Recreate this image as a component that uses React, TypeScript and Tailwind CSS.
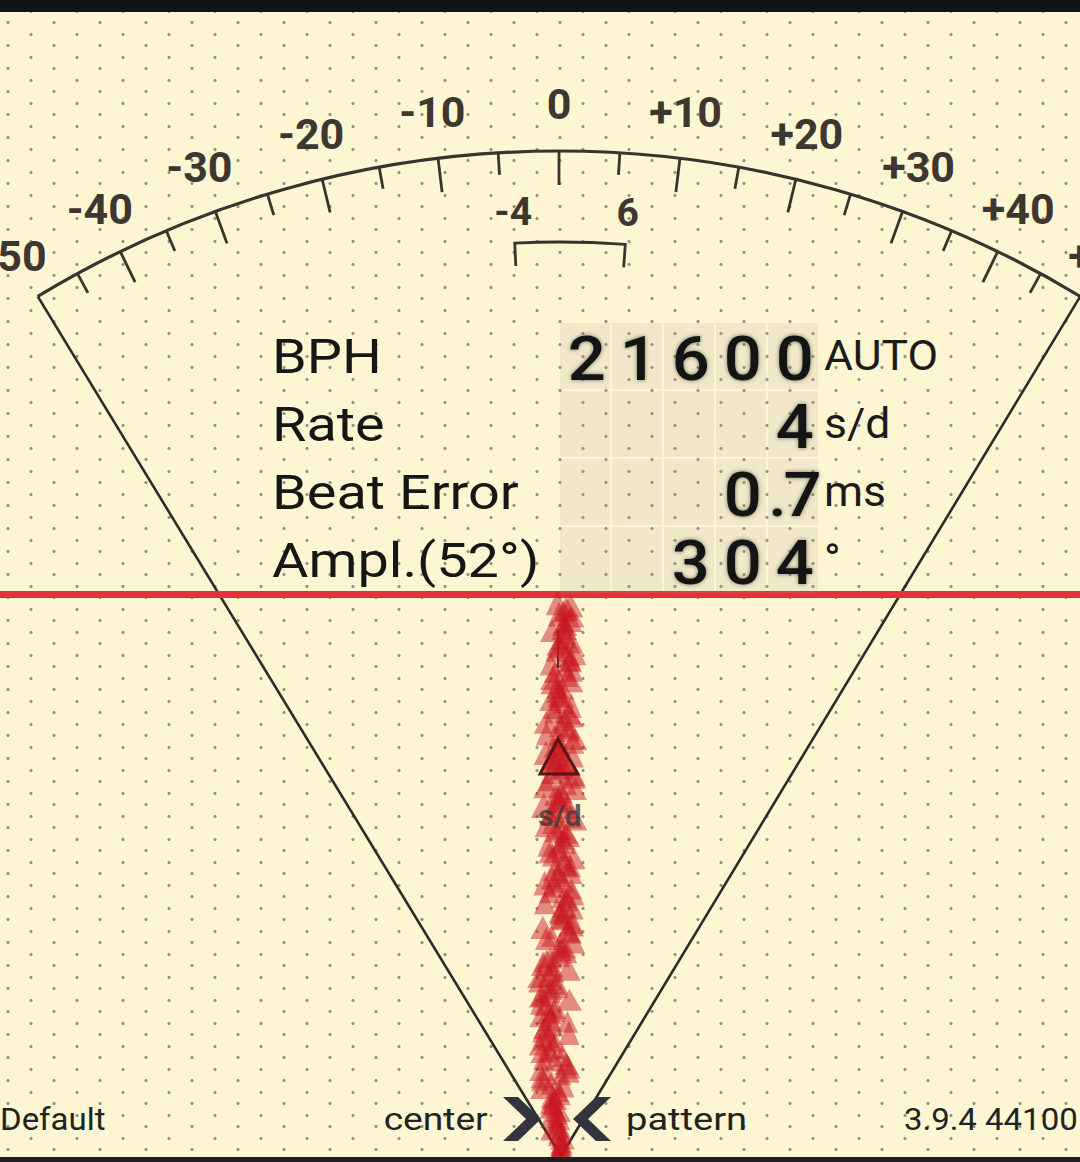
import React from "react";

// dial geometry: centre sits at the apex of the fan, bottom of the screen
const CX = 559;
const CY = 1158;
const R = 1007;
const K = 0.0121;

const angleOf = (v: number) => Math.atan(v * K);

const polar = (v: number, r: number) => {
  const a = angleOf(v);
  return { x: CX + r * Math.sin(a), y: CY - r * Math.cos(a) };
};

const rand = (i: number) => {
  const s = Math.sin(i * 12.9898 + 78.233) * 43758.5453;
  return s - Math.floor(s);
};

type Row = { label: string; digits: string[]; unit: string };

const rows: Row[] = [
  { label: "BPH", digits: ["2", "1", "6", "0", "0"], unit: "AUTO" },
  { label: "Rate", digits: ["", "", "", "", "4"], unit: "s/d" },
  { label: "Beat Error", digits: ["", "", "", "0", ".7"], unit: "ms" },
  { label: "Ampl.(52°)", digits: ["", "", "3", "0", "4"], unit: "°" },
];

function Trail() {
  const tris = [];
  const n = 200;
  for (let i = 0; i < n; i++) {
    const t = i / (n - 1);
    const y = 603 + t * 552;
    const spread = t > 0.88 ? 6 : t < 0.2 ? 12 : 16;
    const x =
      560 +
      5 * Math.cos(Math.PI * t * 1.5) -
      3 * Math.sin(t * 9) +
      (rand(i) - 0.5) * 2 * spread;
    const w = 10 + rand(i + 300) * 3;
    const h = 21 + rand(i + 600) * 4;
    tris.push(
      <polygon
        key={i}
        points={`${x},${y - h / 2} ${x - w},${y + h / 2} ${x + w},${y + h / 2}`}
        fill="#c9161f"
        fillOpacity={0.48}
      />
    );
  }
  return <g>{tris}</g>;
}

function Dial() {
  const left = polar(-50, R);
  const right = polar(50, R);
  const ticks = [];
  for (let v = -45; v <= 45; v += 5) {
    const major = v % 10 === 0;
    const a = polar(v, R);
    const b = polar(v, R - (major ? 34 : 22));
    ticks.push(
      <line key={v} x1={a.x} y1={a.y} x2={b.x} y2={b.y} stroke="#3a332d" strokeWidth={2.8} />
    );
  }
  const labels = [];
  for (let v = -50; v <= 50; v += 10) {
    const p = polar(v, 1054);
    labels.push(
      <text
        key={v}
        x={p.x}
        y={p.y}
        textAnchor="middle"
        dominantBaseline="central"
        fontSize={43}
        fontWeight={700}
        fill="#3d3631"
      >
        {v > 0 ? `+${v}` : `${v}`}
      </text>
    );
  }
  const bl = polar(-4, 916);
  const br = polar(6, 916);
  const bl2 = polar(-4, 893);
  const br2 = polar(6, 893);
  const lm = polar(-4, 947);
  const rm = polar(6, 947);

  return (
    <svg className="absolute inset-0 h-full w-full" viewBox="0 0 1080 1162">
      <path
        d={`M ${left.x} ${left.y} A ${R} ${R} 0 0 1 ${right.x} ${right.y}`}
        fill="none"
        stroke="#3a332d"
        strokeWidth={3.2}
      />
      <line x1={left.x} y1={left.y} x2={CX + 2} y2={CY - 2} stroke="#2e2a26" strokeWidth={2.6} />
      <line x1={right.x} y1={right.y} x2={CX + 2} y2={CY - 2} stroke="#2e2a26" strokeWidth={2.6} />
      {ticks}
      {labels}
      <path
        d={`M ${bl2.x} ${bl2.y} L ${bl.x} ${bl.y} A 916 916 0 0 1 ${br.x} ${br.y} L ${br2.x} ${br2.y}`}
        fill="none"
        stroke="#3a332d"
        strokeWidth={2.8}
      />
      <text x={lm.x} y={lm.y} textAnchor="middle" dominantBaseline="central" fontSize={39} fontWeight={700} fill="#3d3631">
        -4
      </text>
      <text x={rm.x} y={rm.y} textAnchor="middle" dominantBaseline="central" fontSize={39} fontWeight={700} fill="#3d3631">
        6
      </text>
      <rect x={0} y={591} width={1080} height={7} fill="#e2323e" />
      <line x1={558} y1={630} x2={558} y2={668} stroke="#2b2b2b" strokeWidth={2} />
      <Trail />
      <text
        x={560}
        y={815}
        textAnchor="middle"
        dominantBaseline="central"
        fontSize={30}
        fontWeight={700}
        fill="#3a3a3a"
        fillOpacity={0.8}
      >
        s/d
      </text>
      <polygon points="558,739 540,774 578,774" fill="#c9161f" fillOpacity={0.6} stroke="#5b1515" strokeWidth={3} />
    </svg>
  );
}

function Chevron({ flip }: { flip?: boolean }) {
  return (
    <svg width="38" height="46" viewBox="0 0 38 46" className={flip ? "-scale-x-100" : ""}>
      <polygon points="0,1 15,1 38,23 15,45 0,45 23,23" fill="#34343e" />
    </svg>
  );
}

function Readout() {
  return (
    <div className="grid grid-cols-[286px_50px_50px_50px_50px_50px_auto] auto-rows-[66px] gap-x-[2px] gap-y-[2px]">
      {rows.map((row) => (
        <React.Fragment key={row.label}>
          <div className="whitespace-nowrap pt-[1px] text-[49px] leading-[66px] text-[#161616]">
            <span className="inline-block origin-left scale-x-[1.14]">{row.label}</span>
          </div>
          {row.digits.map((d, i) => (
            <div
              key={i}
              className="flex justify-center bg-[rgba(160,155,140,0.15)] pt-[3px] text-[62px] font-medium leading-[66px] tracking-[-3px] text-[#141414] [text-shadow:0_0_4px_rgba(0,0,0,0.5)]"
            >
              <span className="inline-block scale-x-[1.08]">{d}</span>
            </div>
          ))}
          <div className="whitespace-nowrap pl-[4px] text-[42px] leading-[66px] text-[#1b1b1b]">
            <span className="inline-block origin-left scale-x-[1.06]">{row.unit}</span>
          </div>
        </React.Fragment>
      ))}
    </div>
  );
}

export default function App() {
  return (
    <div className="relative h-[1162px] w-full overflow-hidden bg-[#fef6d3] bg-[image:radial-gradient(circle,#9a9482_1.3px,transparent_1.9px),radial-gradient(circle,#9a9482_1.3px,transparent_1.9px)] bg-size-[46px_23px] bg-position-[-15px_11px,8px_0px] font-['Roboto',sans-serif]">
      <Dial />
      <div className="relative flex h-full flex-col">
        <div className="h-[12px] bg-[#121418]" />
        <div className="flex flex-1 flex-col">
          <div className="pl-[272px] pt-[311px]">
            <Readout />
          </div>
          <div className="mt-auto flex items-center pb-[15px] text-[32px] leading-none text-[#222]">
            <div className="flex w-[541px] items-center justify-between">
              <span className="inline-block origin-left scale-x-[1.03]">Default</span>
              <div className="flex items-center gap-[15px]">
                <span className="inline-block origin-right scale-x-[1.16]">center</span>
                <Chevron />
              </div>
            </div>
            <div className="flex flex-1 items-center justify-between pl-[32px] pr-[2px]">
              <div className="flex items-center gap-[15px]">
                <Chevron flip />
                <span className="inline-block origin-left scale-x-[1.19]">pattern</span>
              </div>
              <span className="inline-block origin-right scale-x-[1.03]">3.9.4 44100</span>
            </div>
          </div>
        </div>
        <div className="h-[5px] bg-[#1c1e22]" />
      </div>
    </div>
  );
}
